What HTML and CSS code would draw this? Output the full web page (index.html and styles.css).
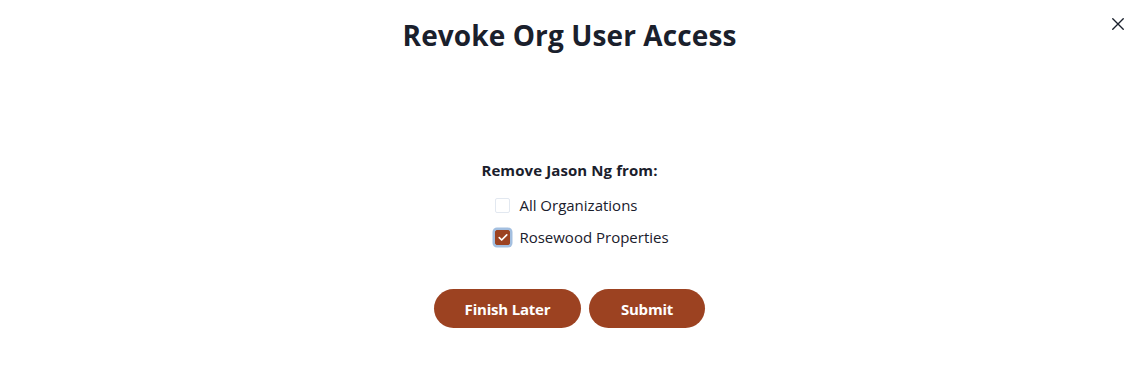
FILE: index.html
```html
<!DOCTYPE html>
<html lang="en">
<head>
<meta charset="utf-8">
<title>Revoke Org User Access</title>
<link rel="stylesheet" href="styles.css">
</head>
<body>
<div class="modal">
  <button class="close" aria-label="Close">
    <svg viewBox="0 0 24 24" width="14" height="14"><path d="M3 3 L21 21 M21 3 L3 21" stroke="#1a202c" stroke-width="2.4" stroke-linecap="round" fill="none"/></svg>
  </button>
  <h1 class="title">Revoke Org User Access</h1>
  <div class="body">
    <p class="lead">Remove Jason Ng from:</p>
    <ul class="options">
      <li class="option">
        <span class="box"></span>
        <span class="label">All Organizations</span>
      </li>
      <li class="option">
        <span class="box checked">
          <svg viewBox="0 0 12 10" width="10" height="9"><path d="M1.5 5.2 L4.4 8 L10.5 1.8" stroke="#fff" stroke-width="2" fill="none" stroke-linecap="round" stroke-linejoin="round"/></svg>
        </span>
        <span class="label">Rosewood Properties</span>
      </li>
    </ul>
  </div>
  <div class="actions">
    <button class="btn btn-later">Finish Later</button>
    <button class="btn btn-submit">Submit</button>
  </div>
</div>
</body>
</html>
```

FILE: styles.css
```css
* { box-sizing: border-box; }
html, body {
  margin: 0;
  padding: 0;
  background: #ffffff;
}
body {
  font-family: "Open Sans", "Noto Sans", sans-serif;
  color: #1a202c;
}
.modal {
  position: relative;
  width: 1139px;
  height: 368px;
  display: flex;
  flex-direction: column;
  align-items: center;
}
.close {
  position: absolute;
  top: 15px;
  right: 12px;
  width: 18px;
  height: 18px;
  padding: 0;
  border: none;
  background: transparent;
  display: flex;
  align-items: center;
  justify-content: center;
}
.title {
  margin: 15px 0 0;
  font-size: 28px;
  font-weight: 700;
  line-height: 40px;
  letter-spacing: 0.1px;
}
.body {
  margin-top: 104px;
  display: flex;
  flex-direction: column;
  align-items: center;
}
.lead {
  margin: 0;
  font-size: 15px;
  font-weight: 700;
  line-height: 22px;
  letter-spacing: 0.1px;
}
.options {
  list-style: none;
  margin: 13px 0 0;
  padding: 0 0 0 25px;
  display: flex;
  flex-direction: column;
  gap: 10px;
}
.option {
  display: flex;
  align-items: center;
  gap: 9px;
  height: 22px;
}
.box {
  width: 15px;
  height: 15px;
  border: 1.5px solid #e2e8f0;
  border-radius: 2px;
  display: flex;
  align-items: center;
  justify-content: center;
}
.box.checked {
  background: #9c4221;
  border-color: #9c4221;
  box-shadow: 0 0 0 2.5px #a3bfe0;
}
.label {
  font-size: 15px;
  line-height: 22px;
  letter-spacing: 0;
}
.actions {
  margin-top: 41px;
  display: flex;
  gap: 8px;
}
.btn {
  height: 39px;
  border: none;
  border-radius: 20px;
  background: #9c4221;
  color: #ffffff;
  font-family: "Open Sans", "Noto Sans", sans-serif;
  font-size: 15px;
  font-weight: 700;
  letter-spacing: -0.2px;
}
.btn-later { width: 147px; }
.btn-submit { width: 116px; }
```
